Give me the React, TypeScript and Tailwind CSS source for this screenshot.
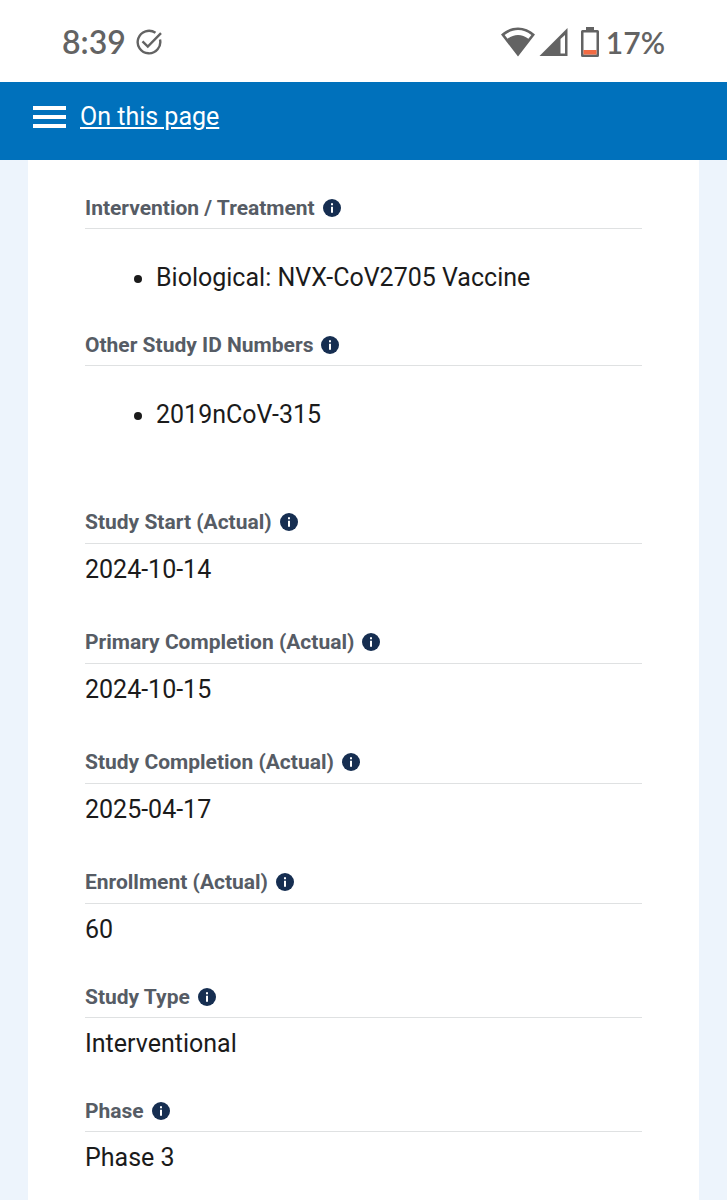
type Entry = { label: string; value: string };

const lists: Entry[] = [
  { label: "Intervention / Treatment", value: "Biological: NVX-CoV2705 Vaccine" },
  { label: "Other Study ID Numbers", value: "2019nCoV-315" },
];

const dates: Entry[] = [
  { label: "Study Start (Actual)", value: "2024-10-14" },
  { label: "Primary Completion (Actual)", value: "2024-10-15" },
  { label: "Study Completion (Actual)", value: "2025-04-17" },
  { label: "Enrollment (Actual)", value: "60" },
];

const design: Entry[] = [
  { label: "Study Type", value: "Interventional" },
  { label: "Phase", value: "Phase 3" },
];

function StatusBar() {
  return (
    <div className="flex h-[82px] items-center justify-between bg-white px-[62px] pt-0.5 font-['Lato',sans-serif] leading-8 font-semibold text-[#636363]">
      <div className="flex items-center gap-2.5">
        <span className="text-[32px]">8:39</span>
        <svg width="26" height="26" viewBox="0 0 26 26" fill="none" stroke="currentColor" strokeWidth="2.4">
          <path d="M19.5 3.8A11.3 11.3 0 1 0 24 10.5" />
          <path d="M6.5 12.4l5.300 5.200L25 4.200" />
        </svg>
      </div>
      <div className="flex items-center">
        <svg width="34" height="30" viewBox="0 0 34 30" fill="currentColor">
          <path
            fillRule="evenodd"
            d="M0 7.500C10-1.800 24-1.800 34 7.500L17 29.500ZM3.600 8L6.600 11.800C12.800 6.600 21.200 6.600 27.400 11.800L30.400 8C22 1.400 12 1.400 3.600 8Z"
          />
        </svg>
        <svg className="ml-1" width="29" height="30" viewBox="0 0 29 30" fill="currentColor">
          <path fillRule="evenodd" d="M28.500 1V29H.5ZM21.500 12V26.500H26V8Z" />
        </svg>
        <svg className="ml-3" width="20" height="32" viewBox="0 0 20 32">
          <path
            fill="currentColor"
            fillRule="evenodd"
            d="M6 1H14V4H17.500Q19 4 19 5.500V29.500Q19 31 17.500 31H2.500Q1 31 1 29.500V5.500Q1 4 2.500 4H6ZM3.500 6.500V28.500H16.500V6.500Z"
          />
          <path fill="#f26b43" d="M3.500 24H16.500V28.500H3.500Z" />
        </svg>
        <span className="ml-1.5 text-[30px]">17%</span>
      </div>
    </div>
  );
}

function Heading({ label, className }: { label: string; className: string }) {
  return (
    <div className={`flex items-center gap-2 border-b border-[#dfe1e2] ${className}`}>
      <h2 className="text-[21px] leading-6 font-bold text-[#565c65]">{label}</h2>
      <button type="button" aria-label={`About ${label}`}>
        <svg className="block" width="18" height="18" viewBox="0 0 18 18">
          <circle cx="9" cy="9" r="9" fill="#162e51" />
          <path d="M8 4.200h2v2H8zM8 7.700h2v6H8z" fill="#fff" />
        </svg>
      </button>
    </div>
  );
}

export default function App() {
  return (
    <div className="min-h-screen bg-[#edf4fc] font-['Roboto',sans-serif] text-[25px] leading-8 text-[#1b1b1b]">
      <StatusBar />
      <header className="flex h-[78px] items-center bg-[#0071bc] px-[33px] pb-2 text-white">
        <a href="#contents" className="flex items-center gap-3.5">
          <svg width="33" height="22" viewBox="0 0 33 22" fill="currentColor" aria-hidden="true">
            <path d="M0 0h33v4H0zM0 9h33v4H0zM0 18h33v4H0z" />
          </svg>
          <span className="underline">On this page</span>
        </a>
      </header>

      <main id="contents" className="mx-7 bg-white px-[57px] pt-9 pb-7">
        <div className="flex flex-col gap-[39px]">
          {lists.map((item) => (
            <section key={item.label}>
              <Heading label={item.label} className="pb-2" />
              <ul className="mt-[33px] list-disc pl-[71px]">
                <li>{item.value}</li>
              </ul>
            </section>
          ))}
        </div>

        <div className="mt-[79px] flex flex-col gap-11">
          {dates.map((item) => (
            <section key={item.label}>
              <Heading label={item.label} className="pb-[9px]" />
              <p className="mt-2.5">{item.value}</p>
            </section>
          ))}
        </div>

        <div className="mt-[39px] flex flex-col gap-[39px]">
          {design.map((item) => (
            <section key={item.label}>
              <Heading label={item.label} className="pb-2" />
              <p className="mt-2.5">{item.value}</p>
            </section>
          ))}
        </div>
      </main>
    </div>
  );
}
